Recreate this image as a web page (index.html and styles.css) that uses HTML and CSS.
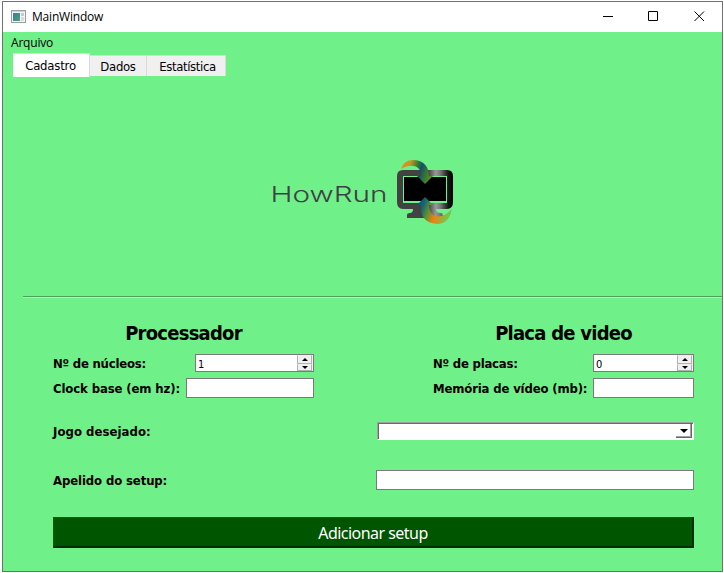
FILE: index.html
```html
<!DOCTYPE html>
<html lang="pt-BR">
<head>
<meta charset="utf-8">
<title>MainWindow</title>
<link rel="stylesheet" href="styles.css">
</head>
<body>
<div class="window">
  <header class="titlebar">
    <svg class="app-icon" width="15" height="13" viewBox="0 0 15 13">
      <defs><linearGradient id="app" x1="0" y1="0" x2="1" y2="1"><stop offset="0" stop-color="#3d78ae"/><stop offset="1" stop-color="#49a36c"/></linearGradient></defs>
      <rect x=".5" y=".5" width="14" height="12" fill="#f5f5f5" stroke="#999ea5"/>
      <path d="M1 1.5H14" stroke="#cdd2d8"/>
      <rect x="2" y="3" width="7" height="8" fill="url(#app)"/>
      <rect x="10" y="3" width="3" height="3" fill="#c8ccd0"/><rect x="10" y="7" width="3" height="4" fill="#dadada"/>
    </svg>
    <span class="title">MainWindow</span>
    <svg class="controls" width="103" height="11" viewBox="0 0 103 11" fill="none" stroke="#000">
      <path d="M0 5.5H10M45.500 .5H54.500V9.500H45.500Z"/>
      <path d="M91.500 .5L101 10M101 .5L91.500 10"/>
    </svg>
  </header>
  <main class="content">
    <nav class="menu">Arquivo</nav>
    <div class="tabs">
      <div class="tab active">Cadastro</div><div class="tab dados">Dados</div><div class="tab stats">Estatística</div>
    </div>
    <section class="brand">
      <svg width="184" height="68" viewBox="271 158 184 68">
        <defs>
          <linearGradient id="metal" gradientUnits="userSpaceOnUse" x1="397" y1="0" x2="454" y2="0">
            <stop offset="0" stop-color="#424242"/><stop offset=".55" stop-color="#424242"/><stop offset=".68" stop-color="#999"/><stop offset=".76" stop-color="#777"/><stop offset=".9" stop-color="#151515"/><stop offset="1" stop-color="#000"/>
          </linearGradient>
          <linearGradient id="down" x1="0" y1="0" x2="1" y2=".25"><stop offset="0" stop-color="#f58b12"/><stop offset=".3" stop-color="#c89527"/><stop offset=".55" stop-color="#2b7837"/><stop offset=".68" stop-color="#155070"/><stop offset=".84" stop-color="#2f7435"/><stop offset="1" stop-color="#568326"/></linearGradient>
          <linearGradient id="up" x1="0" y1="0" x2="1" y2=".3"><stop offset="0" stop-color="#153f68"/><stop offset=".25" stop-color="#176474"/><stop offset=".42" stop-color="#548e32"/><stop offset=".66" stop-color="#ee8212"/><stop offset="1" stop-color="#79c34d"/></linearGradient>
        </defs>
        <text class="wordmark" x="270.500" y="201.500" textLength="117" lengthAdjust="spacingAndGlyphs">HowRun</text>
        <path fill="url(#metal)" fill-rule="evenodd" d="M403 170H447Q453 170 453 176V202Q453 209 447 209H403Q397 209 397 202V176Q397 170 403 170ZM403 176V203H447V176Z"/>
        <path fill="url(#metal)" d="M413 209H436Q436 213 441 213Q443 213 443 218H407V215Q407 213 410 213Q413 213 413 209Z"/>
        <path d="M404 177H446V201H404Z"/>
        <path fill="url(#down)" d="M401 169Q404 160 413 160C424 160 429 167 429 176H433L425 184L417 176H421C422 167 413 162 401 169Z"/>
        <path fill="url(#up)" d="M425 197L433 205H429C429 216 439 222 452 209Q449 224 437 224C425 223 420 216 421 205H417Z"/>
      </svg>
    </section>
    <div class="rule"></div>
    <form class="form">
      <div class="groups">
        <section class="group">
          <h2>Processador</h2>
          <div class="row first"><label class="nucleos">Nº de núcleos:</label><div class="spin cpu"><span>1</span><div class="steps"><i class="step up"></i><i class="step down"></i></div></div></div>
          <div class="row"><label class="clock">Clock base (em hz):</label><div class="field cpu-field"></div></div>
        </section>
        <section class="group">
          <h2 class="gpu-title">Placa de video</h2>
          <div class="row first"><label class="placas">Nº de placas:</label><div class="spin gpu"><span>0</span><div class="steps"><i class="step up"></i><i class="step down"></i></div></div></div>
          <div class="row"><label class="memoria">Memória de vídeo (mb):</label><div class="field gpu-field"></div></div>
        </section>
      </div>
      <div class="row game"><label class="jogo">Jogo desejado:</label><div class="combo"><div class="drop"><i></i></div></div></div>
      <div class="row nick"><label>Apelido do setup:</label><div class="field nick-field"></div></div>
      <button type="button" class="submit">Adicionar setup</button>
    </form>
  </main>
</div>
</body>
</html>
```
FILE: styles.css
```css
* { box-sizing: border-box; }
body { margin: 0; padding: 1px 1px 1px 2px; background: #fff; color: #000; font-family: "DejaVu Sans Condensed", "DejaVu Sans", sans-serif; overflow: hidden; }
.window { width: 721px; height: 571px; border: 1px solid #707070; background: #70f089; display: flex; flex-direction: column; }
.titlebar { height: 30px; flex: none; background: #fff; display: flex; align-items: center; padding: 0 16px 1px 8px; }
.title { margin-left: 6px; font: 12px/16px "Open Sans", sans-serif; letter-spacing: -.2px; }
.controls { margin-left: auto; }
.content { display: flex; flex-direction: column; flex: 1; }
.menu { height: 21px; padding-left: 8px; font: 12px/22px "Open Sans", sans-serif; letter-spacing: -.2px; }
.tabs { display: flex; align-items: center; height: 24px; padding-left: 10px; font-size: 13px; letter-spacing: -.3px; }
.tab { height: 21px; line-height: 22px; width: 57px; text-align: center; background: #f0f0f0; border: 1px solid #d9d9d9; border-left: 0; border-bottom: 0; }
.tab.active { width: 77px; height: 24px; line-height: 23px; background: #fff; padding-right: 1px; letter-spacing: -.2px; }
.tab.stats { width: 79px; padding-left: 3px; letter-spacing: -.35px; }
.brand { height: 219px; padding: 81px 0 0 268px; }
.brand svg { display: block; }
.wordmark { font: 300 22px Inter, sans-serif; fill: #3e4144; }
.rule { height: 2px; margin-left: 20px; background: #4ba05b; border-bottom: 1px solid #9dffad; }
.form { padding: 22px 28px 0 50px; }
.groups { display: flex; justify-content: space-between; }
.group { width: 261px; }
h2 { margin: 0; height: 34px; font-size: 20px; line-height: 26px; text-align: center; letter-spacing: -.75px; }
.row { display: flex; align-items: center; justify-content: space-between; height: 20px; }
.row.first { height: 18px; margin-bottom: 6px; }
label { font-size: 13px; line-height: 16px; padding-top: 2px; font-weight: bold; letter-spacing: -.12px; white-space: nowrap; }
.nucleos, .placas { letter-spacing: -.22px; }
.memoria { letter-spacing: -.16px; }
.jogo { letter-spacing: .05px; }
.field { height: 20px; border: 1px solid #7a7a7a; background: #fff; }
.cpu-field { width: 128px; }
.gpu-field { width: 101px; }
.spin { height: 18px; border: 1px solid #7a7a7a; background: #fff; display: flex; justify-content: space-between; font-size: 11px; line-height: 19px; padding-left: 2px; }
.cpu { width: 119px; }
.gpu { width: 101px; }
.steps { width: 16px; padding: 0 1px 0 0; background: #f0f0f0; }
.step { display: flex; align-items: center; justify-content: center; height: 7px; background: #f0f0f0; border: 1px solid #b2b2b2; border-top-color: #eee; }
.step.up { height: 9px; }
.step::before { content: ""; border: 3px solid transparent; border-top: 0; border-bottom: 3px solid #000; }
.step.down::before { transform: rotate(180deg); }
.game { margin-top: 23px; }
.combo { width: 317px; height: 18px; padding: 1px; background: #fff; border: 1px solid #fff; border-top-color: #a0a0a0; border-left-color: #a0a0a0; box-shadow: inset 1px 1px #696969; display: flex; justify-content: flex-end; }
.drop { width: 16px; height: 14px; border-right: 1px solid #696969; border-bottom: 1px solid #696969; box-shadow: inset -1px -1px #a0a0a0; display: flex; justify-content: center; align-items: center; }
.drop i { border: 4px solid transparent; border-top-color: #000; border-bottom: 0; }
.nick { margin-top: 29px; }
.nick-field { width: 318px; }
.submit { display: block; width: 100%; height: 31px; margin-top: 27px; padding: 1px 0 0; background: #005500; border: 1px solid #006300; border-right: 2px solid #002a00; border-bottom: 2px solid #002a00; color: #fff; font: 16px/28px "Noto Sans", sans-serif; letter-spacing: -.53px; }
```
